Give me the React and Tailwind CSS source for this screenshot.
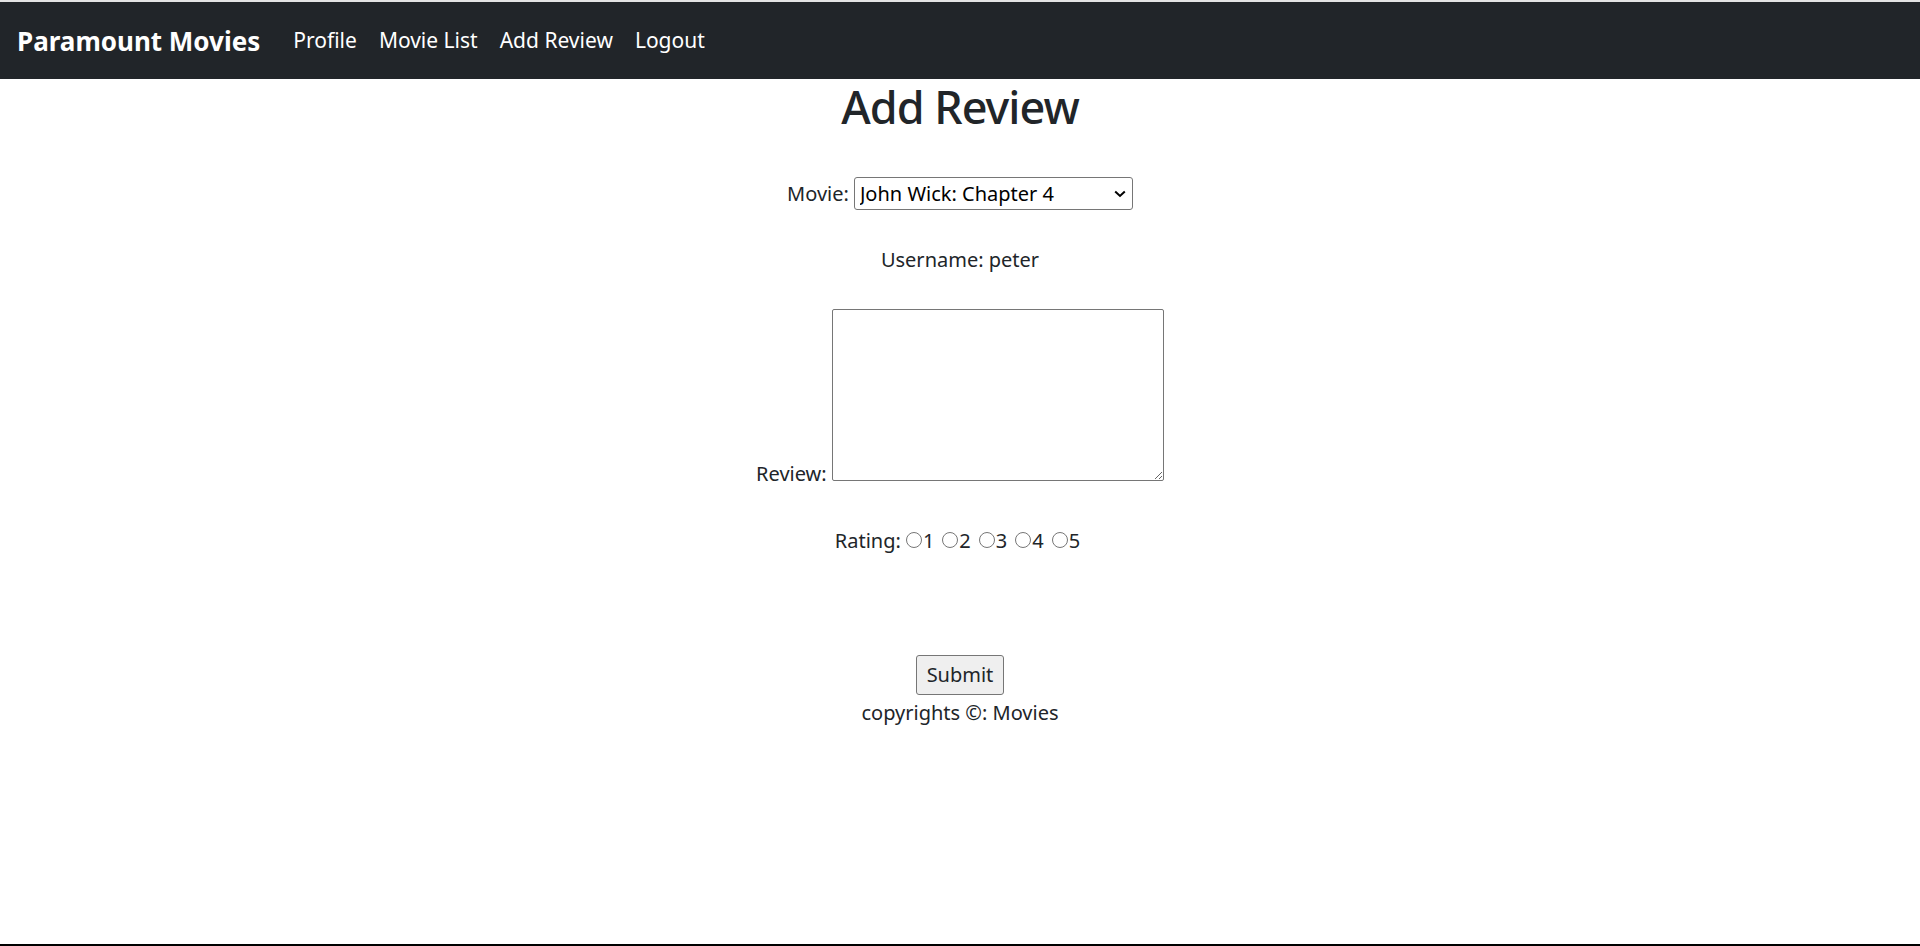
import { useState } from "react";

const links = ["Profile", "Movie List", "Add Review", "Logout"];

const Navbar = () => (
  <div>
    <div className="h-[2px] bg-[#e3e3e3]" />
    <nav className="flex items-center h-[77px] bg-[#212529] pl-[17px]">
      <a className="text-white font-bold text-[26px] mr-[22px] leading-none">
        Paramount Movies
      </a>
      {links.map((l) => (
        <a key={l} className="text-white text-[21px] px-[11px] leading-none">
          {l}
        </a>
      ))}
    </nav>
  </div>
);

const Chevron = () => (
  <svg
    className="absolute right-[7px] top-1/2 -translate-y-1/2 pointer-events-none"
    width="12"
    height="8"
    viewBox="0 0 12 8"
    fill="none"
  >
    <path d="M1.2 1.5l4.8 4.5 4.8-4.5" stroke="#000" strokeWidth="2" />
  </svg>
);

const App = () => {
  const [rating, setRating] = useState(null);

  return (
    <div className="h-[946px] flex flex-col bg-white text-[#212529] font-['Noto_Sans',sans-serif] text-[20px]">
      <Navbar />
      <main className="flex-1 flex flex-col items-center">
        <h1 className="mt-[3px] text-[45px] font-medium tracking-[-1px] leading-[50px] h-[50px]">
          Add Review
        </h1>

        <div className="flex items-center gap-[5px] mt-[45px] h-[33px]">
          <label className="leading-[30px]">Movie:</label>
          <div className="relative">
            <select className="appearance-none w-[279px] h-[33px] border border-[#767676] rounded-[3px] pl-[5px] pr-[24px] text-[20px] text-black">
              <option>John Wick: Chapter 4</option>
              <option>Top Gun: Maverick</option>
              <option>Mission: Impossible</option>
            </select>
            <Chevron />
          </div>
        </div>

        <p className="mt-[35px] leading-[30px]">Username: peter</p>

        <div className="mt-[34px] h-[172px]">
          <label>Review: </label>
          <textarea className="inline-block align-baseline w-[332px] h-[172px] border border-[#767676] rounded-[2px] resize" />
        </div>

        <div className="flex items-center mt-[45px] leading-[30px]">
          <span className="mr-[2px]">Rating:</span>
          {[1, 2, 3, 4, 5].map((n) => (
            <label key={n} className="flex items-center mr-[5px]">
              <input
                type="radio"
                name="rating"
                checked={rating === n}
                onChange={() => setRating(n)}
                className="w-[16px] h-[16px] ml-[3px] mr-[1px] mt-[-3px]"
              />
              {n}
            </label>
          ))}
        </div>

        <button className="mt-[99px] h-[40px] px-[10px] bg-[#efefef] border border-[#767676] rounded-[3px] leading-[30px]">
          Submit
        </button>
        <p className="mt-[3px] leading-[30px]">copyrights ©: Movies</p>
      </main>
      <div className="h-[2px] bg-black" />
    </div>
  );
};

export default App;
